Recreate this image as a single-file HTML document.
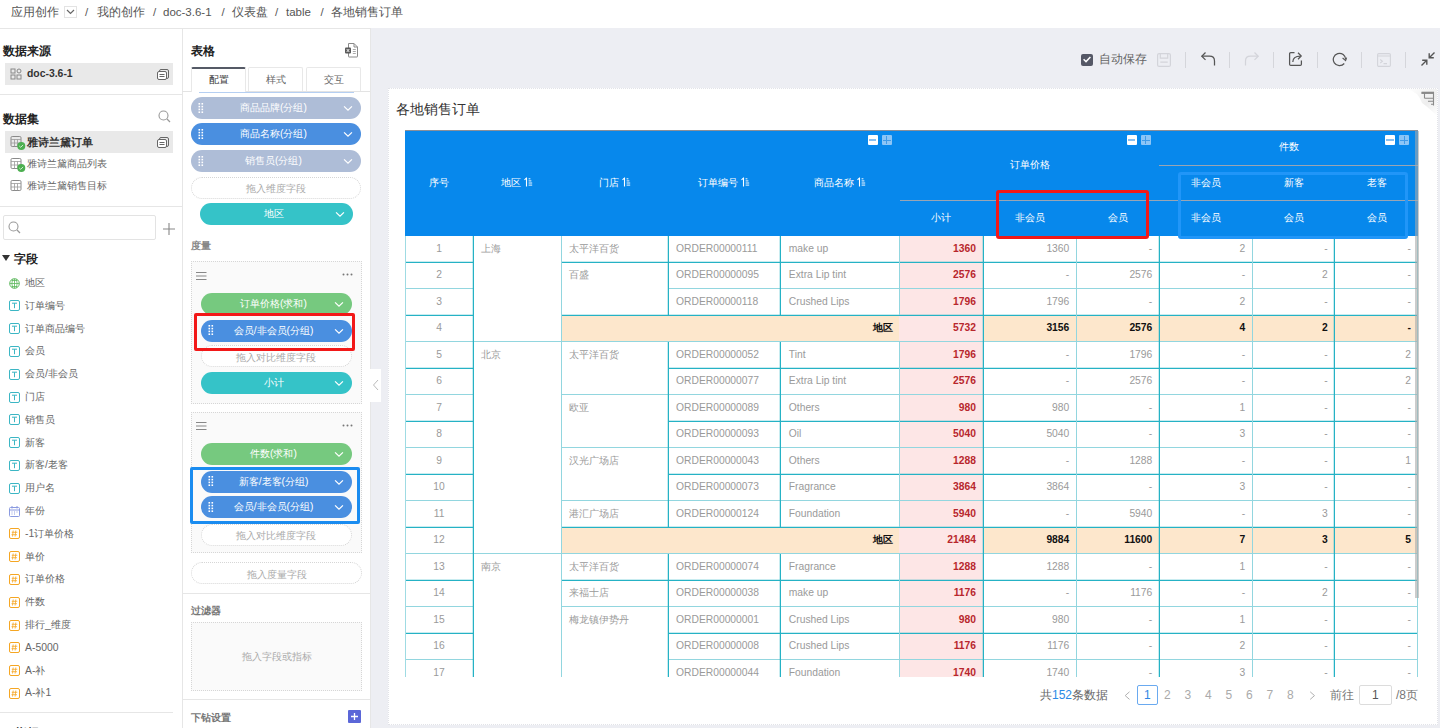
<!DOCTYPE html><html><head><meta charset="utf-8"><style>
*{box-sizing:border-box;margin:0;padding:0}
html,body{width:1440px;height:728px;overflow:hidden;background:#fff;font-family:"Liberation Sans",sans-serif;color:#333}
.a{position:absolute;white-space:nowrap}
.bc{font-size:11.5px;color:#555;top:4px;line-height:16px}
.pt{font-size:11.7px;font-weight:bold;color:#222}
.li{font-size:10.4px;color:#666;line-height:14px}
.pill{position:absolute;height:22px;border-radius:11px;color:#fff;font-size:10.2px;line-height:22px;text-align:center;padding-right:5px}
.dash{position:absolute;height:22px;border-radius:11px;border:1px dotted #d6d6d6;color:#aaa;font-size:10.2px;line-height:20px;text-align:center;padding-top:1.5px}
.chev{position:absolute;right:8px;top:8px;width:10px;height:7px}
.grip{position:absolute;left:7px;top:5.8px;width:6px;height:10px}
.ht{position:absolute;color:#fff;font-size:10.3px;line-height:14px;white-space:nowrap;transform:translate(-50%,-50%)}
.td{position:absolute;font-size:10.3px;line-height:14px;color:#9a9a9a;white-space:nowrap}
</style></head><body>
<div class="a" style="left:0;top:0;width:1440px;height:29px;background:#fff;border-bottom:1px solid #e6e6e6"></div>
<div class="a bc" style="left:11px">应用创作</div>
<div class="a bc" style="left:97px">我的创作</div>
<div class="a bc" style="left:163px">doc-3.6-1</div>
<div class="a bc" style="left:232px">仪表盘</div>
<div class="a bc" style="left:286px">table</div>
<div class="a bc" style="left:331px">各地销售订单</div>
<div class="a bc" style="left:85px">/</div>
<div class="a bc" style="left:153px">/</div>
<div class="a bc" style="left:221.5px">/</div>
<div class="a bc" style="left:275px">/</div>
<div class="a bc" style="left:320.5px">/</div>
<div class="a" style="left:64px;top:5.5px;width:12.5px;height:12.5px;border:1px solid #e3e3e3;background:#fff"></div>
<svg class="a" style="left:66px;top:8.5px" width="9" height="6"><path d="M1 1 L4.5 4.5 L8 1" stroke="#666" stroke-width="1.2" fill="none"/></svg>
<div class="a" style="left:182px;top:28px;width:1px;height:700px;background:#e6e6e6"></div>
<div class="a pt" style="left:3px;top:43px;line-height:16px">数据来源</div>
<div class="a" style="left:5px;top:63px;width:168px;height:22px;background:#e9e9e9"></div>
<svg class="a" style="left:10px;top:68px" width="12" height="12"><rect x="1" y="1" width="4" height="4" fill="none" stroke="#888" stroke-width="1"/><rect x="7" y="1" width="4" height="4" rx="2" fill="none" stroke="#888"/><rect x="1" y="7" width="4" height="4" fill="none" stroke="#888"/><rect x="7" y="7" width="4" height="4" fill="none" stroke="#888"/></svg>
<div class="a" style="left:27px;top:67px;font-size:10.4px;font-weight:bold;color:#333;line-height:14px">doc-3.6-1</div>
<svg class="a" style="left:157px;top:68px" width="12" height="12"><rect x="2.5" y="1.5" width="9" height="9" rx="1.5" fill="none" stroke="#666"/><rect x="0.5" y="3.5" width="9" height="8" rx="1.5" fill="#fff" stroke="#666"/><path d="M2.5 6.5h5M2.5 8.5h5" stroke="#666"/></svg>
<div class="a" style="left:0;top:94px;width:182px;height:1px;background:#e6e6e6"></div>
<div class="a pt" style="left:3px;top:111px;line-height:16px">数据集</div>
<svg class="a" style="left:158px;top:110px" width="13" height="13"><circle cx="5.5" cy="5.5" r="4.5" fill="none" stroke="#999" stroke-width="1.1"/><path d="M9 9 L12 12" stroke="#999" stroke-width="1.2"/></svg>
<div class="a" style="left:5px;top:131px;width:168px;height:22px;background:#e9e9e9"></div>
<svg class="a" style="left:10px;top:136px" width="17" height="15"><rect x="1" y="0.5" width="10" height="10" rx="1.2" fill="none" stroke="#8a8a8a"/><path d="M1 3.5h10M1 7h10M4.5 3.5v7M7.5 3.5v7" stroke="#9a9a9a" stroke-width="0.8"/><circle cx="11.3" cy="10" r="4" fill="#4caf50"/><path d="M9.3 10l1.4 1.3 2.4-2.4" stroke="#dff3df" stroke-width="0.9" fill="none"/></svg>
<div class="a" style="left:27px;top:135px;font-size:11px;font-weight:bold;color:#333;line-height:14px">雅诗兰黛订单</div>
<svg class="a" style="left:157px;top:136px" width="12" height="12"><rect x="2.5" y="1.5" width="9" height="9" rx="1.5" fill="none" stroke="#666"/><rect x="0.5" y="3.5" width="9" height="8" rx="1.5" fill="#fff" stroke="#666"/><path d="M2.5 6.5h5M2.5 8.5h5" stroke="#666"/></svg>
<svg class="a" style="left:10px;top:158px" width="17" height="15"><rect x="1" y="0.5" width="10" height="10" rx="1.2" fill="none" stroke="#8a8a8a"/><path d="M1 3.5h10M1 7h10M4.5 3.5v7M7.5 3.5v7" stroke="#9a9a9a" stroke-width="0.8"/><circle cx="11.3" cy="10" r="4" fill="#4caf50"/><path d="M9.3 10l1.4 1.3 2.4-2.4" stroke="#dff3df" stroke-width="0.9" fill="none"/></svg>
<div class="a li" style="left:27px;top:157px">雅诗兰黛商品列表</div>
<svg class="a" style="left:10px;top:180px" width="17" height="15"><rect x="1" y="0.5" width="10" height="10" rx="1.2" fill="none" stroke="#8a8a8a"/><path d="M1 3.5h10M1 7h10M4.5 3.5v7M7.5 3.5v7" stroke="#9a9a9a" stroke-width="0.8"/></svg>
<div class="a li" style="left:27px;top:179px">雅诗兰黛销售目标</div>
<div class="a" style="left:0;top:206px;width:182px;height:1px;background:#e6e6e6"></div>
<div class="a" style="left:3px;top:215px;width:153px;height:25px;border:1px solid #e3e3e3;border-radius:2px"></div>
<svg class="a" style="left:8px;top:221px" width="13" height="13"><circle cx="5.5" cy="5.5" r="4.5" fill="none" stroke="#999" stroke-width="1.1"/><path d="M9 9 L12 12" stroke="#999" stroke-width="1.2"/></svg>
<svg class="a" style="left:163px;top:223px" width="12" height="12"><path d="M6 0v12M0 6h12" stroke="#888" stroke-width="1.1"/></svg>
<svg class="a" style="left:2px;top:255px" width="8" height="6"><path d="M0 0h8L4 6z" fill="#333"/></svg>
<div class="a pt" style="left:14px;top:251px;line-height:16px">字段</div>
<svg class="a" style="left:9px;top:278px" width="11" height="11"><circle cx="5.5" cy="5.5" r="4.8" fill="none" stroke="#5cb85c"/><path d="M0.7 5.5h9.6M5.5 0.7v9.6M2.8 2.5h5.4M2.8 8.5h5.4M3.6 1.2q-1.4 4.3 0 8.6M7.4 1.2q1.4 4.3 0 8.6" stroke="#5cb85c" stroke-width="0.8" fill="none"/></svg>
<div class="a li" style="left:25px;top:276.0px">地区</div>
<svg class="a" style="left:9px;top:300px" width="11" height="11"><rect x="0.5" y="0.5" width="10" height="10" rx="1.5" fill="none" stroke="#3cb6c4"/><path d="M3 3.2h5M5.5 3.2v5" stroke="#3cb6c4" stroke-width="1"/></svg>
<div class="a li" style="left:25px;top:298.8px">订单编号</div>
<svg class="a" style="left:9px;top:323px" width="11" height="11"><rect x="0.5" y="0.5" width="10" height="10" rx="1.5" fill="none" stroke="#3cb6c4"/><path d="M3 3.2h5M5.5 3.2v5" stroke="#3cb6c4" stroke-width="1"/></svg>
<div class="a li" style="left:25px;top:321.6px">订单商品编号</div>
<svg class="a" style="left:9px;top:346px" width="11" height="11"><rect x="0.5" y="0.5" width="10" height="10" rx="1.5" fill="none" stroke="#3cb6c4"/><path d="M3 3.2h5M5.5 3.2v5" stroke="#3cb6c4" stroke-width="1"/></svg>
<div class="a li" style="left:25px;top:344.4px">会员</div>
<svg class="a" style="left:9px;top:369px" width="11" height="11"><rect x="0.5" y="0.5" width="10" height="10" rx="1.5" fill="none" stroke="#3cb6c4"/><path d="M3 3.2h5M5.5 3.2v5" stroke="#3cb6c4" stroke-width="1"/></svg>
<div class="a li" style="left:25px;top:367.2px">会员/非会员</div>
<svg class="a" style="left:9px;top:392px" width="11" height="11"><rect x="0.5" y="0.5" width="10" height="10" rx="1.5" fill="none" stroke="#3cb6c4"/><path d="M3 3.2h5M5.5 3.2v5" stroke="#3cb6c4" stroke-width="1"/></svg>
<div class="a li" style="left:25px;top:390.0px">门店</div>
<svg class="a" style="left:9px;top:414px" width="11" height="11"><rect x="0.5" y="0.5" width="10" height="10" rx="1.5" fill="none" stroke="#3cb6c4"/><path d="M3 3.2h5M5.5 3.2v5" stroke="#3cb6c4" stroke-width="1"/></svg>
<div class="a li" style="left:25px;top:412.8px">销售员</div>
<svg class="a" style="left:9px;top:437px" width="11" height="11"><rect x="0.5" y="0.5" width="10" height="10" rx="1.5" fill="none" stroke="#3cb6c4"/><path d="M3 3.2h5M5.5 3.2v5" stroke="#3cb6c4" stroke-width="1"/></svg>
<div class="a li" style="left:25px;top:435.6px">新客</div>
<svg class="a" style="left:9px;top:460px" width="11" height="11"><rect x="0.5" y="0.5" width="10" height="10" rx="1.5" fill="none" stroke="#3cb6c4"/><path d="M3 3.2h5M5.5 3.2v5" stroke="#3cb6c4" stroke-width="1"/></svg>
<div class="a li" style="left:25px;top:458.4px">新客/老客</div>
<svg class="a" style="left:9px;top:483px" width="11" height="11"><rect x="0.5" y="0.5" width="10" height="10" rx="1.5" fill="none" stroke="#3cb6c4"/><path d="M3 3.2h5M5.5 3.2v5" stroke="#3cb6c4" stroke-width="1"/></svg>
<div class="a li" style="left:25px;top:481.2px">用户名</div>
<svg class="a" style="left:9px;top:506px" width="11" height="11"><rect x="0.5" y="1.5" width="10" height="9" rx="1" fill="none" stroke="#8a9ae0"/><path d="M0.5 4h10M3 0v2.5M8 0v2.5" stroke="#8a9ae0"/><path d="M2.5 6h1M5 6h1M7.5 6h1M2.5 8h1M5 8h1" stroke="#8a9ae0"/></svg>
<div class="a li" style="left:25px;top:504.0px">年份</div>
<svg class="a" style="left:9px;top:528px" width="11" height="11"><rect x="0.5" y="0.5" width="10" height="10" rx="1.5" fill="none" stroke="#f5a623"/><path d="M4.2 2.5l-0.7 6M6.8 2.5l-0.7 6M2.8 4.3h5.5M2.5 6.7h5.5" stroke="#f5a623" stroke-width="0.8"/></svg>
<div class="a li" style="left:25px;top:526.8px">-1订单价格</div>
<svg class="a" style="left:9px;top:551px" width="11" height="11"><rect x="0.5" y="0.5" width="10" height="10" rx="1.5" fill="none" stroke="#f5a623"/><path d="M4.2 2.5l-0.7 6M6.8 2.5l-0.7 6M2.8 4.3h5.5M2.5 6.7h5.5" stroke="#f5a623" stroke-width="0.8"/></svg>
<div class="a li" style="left:25px;top:549.6px">单价</div>
<svg class="a" style="left:9px;top:574px" width="11" height="11"><rect x="0.5" y="0.5" width="10" height="10" rx="1.5" fill="none" stroke="#f5a623"/><path d="M4.2 2.5l-0.7 6M6.8 2.5l-0.7 6M2.8 4.3h5.5M2.5 6.7h5.5" stroke="#f5a623" stroke-width="0.8"/></svg>
<div class="a li" style="left:25px;top:572.4px">订单价格</div>
<svg class="a" style="left:9px;top:597px" width="11" height="11"><rect x="0.5" y="0.5" width="10" height="10" rx="1.5" fill="none" stroke="#f5a623"/><path d="M4.2 2.5l-0.7 6M6.8 2.5l-0.7 6M2.8 4.3h5.5M2.5 6.7h5.5" stroke="#f5a623" stroke-width="0.8"/></svg>
<div class="a li" style="left:25px;top:595.2px">件数</div>
<svg class="a" style="left:9px;top:620px" width="11" height="11"><rect x="0.5" y="0.5" width="10" height="10" rx="1.5" fill="none" stroke="#f5a623"/><path d="M4.2 2.5l-0.7 6M6.8 2.5l-0.7 6M2.8 4.3h5.5M2.5 6.7h5.5" stroke="#f5a623" stroke-width="0.8"/></svg>
<div class="a li" style="left:25px;top:618.0px">排行_维度</div>
<svg class="a" style="left:9px;top:642px" width="11" height="11"><rect x="0.5" y="0.5" width="10" height="10" rx="1.5" fill="none" stroke="#f5a623"/><path d="M4.2 2.5l-0.7 6M6.8 2.5l-0.7 6M2.8 4.3h5.5M2.5 6.7h5.5" stroke="#f5a623" stroke-width="0.8"/></svg>
<div class="a li" style="left:25px;top:640.8px">A-5000</div>
<svg class="a" style="left:9px;top:665px" width="11" height="11"><rect x="0.5" y="0.5" width="10" height="10" rx="1.5" fill="none" stroke="#f5a623"/><path d="M4.2 2.5l-0.7 6M6.8 2.5l-0.7 6M2.8 4.3h5.5M2.5 6.7h5.5" stroke="#f5a623" stroke-width="0.8"/></svg>
<div class="a li" style="left:25px;top:663.6px">A-补</div>
<svg class="a" style="left:9px;top:688px" width="11" height="11"><rect x="0.5" y="0.5" width="10" height="10" rx="1.5" fill="none" stroke="#f5a623"/><path d="M4.2 2.5l-0.7 6M6.8 2.5l-0.7 6M2.8 4.3h5.5M2.5 6.7h5.5" stroke="#f5a623" stroke-width="0.8"/></svg>
<div class="a li" style="left:25px;top:686.4px">A-补1</div>
<div class="a" style="left:0;top:712px;width:173px;height:1px;background:#e6e6e6"></div>
<div class="a pt" style="left:15px;top:725px;line-height:16px;color:#444">指标</div>
<div class="a" style="left:370px;top:28px;width:1px;height:700px;background:#e6e6e6"></div>
<div class="a pt" style="left:191px;top:43px;line-height:16px">表格</div>
<svg class="a" style="left:345px;top:42.5px" width="14" height="15"><path d="M3.5 0.5h5.5l3.5 3.5v9.5q0 0.5-0.5 0.5h-8q-0.5 0-0.5-0.5z" fill="#fff" stroke="#8a8a8a"/><path d="M9 0.5v3.5h3.5" fill="none" stroke="#8a8a8a"/><rect x="0" y="4.5" width="6" height="6" rx="1" fill="#5a5a5a"/><path d="M1.7 6 L4.3 9 M4.3 6 L1.7 9" stroke="#fff" stroke-width="0.9"/><path d="M7.8 6.5h3M7.8 8.5h3M7.8 10.5h3" stroke="#aaa" stroke-width="1"/></svg>
<div class="a" style="left:182px;top:91px;width:188px;height:1px;background:#e3e3e3"></div>
<div class="a" style="left:191px;top:67px;width:54.5px;height:25px;background:#fff;border:1px solid #e8e8e8;border-top:2px solid #555a66;border-bottom:none;border-radius:2px 2px 0 0"></div>
<div class="a" style="left:248px;top:67px;width:55px;height:24px;background:#fff;border:1px solid #e8e8e8;border-bottom:none;border-radius:2px 2px 0 0"></div>
<div class="a" style="left:306px;top:67px;width:55px;height:24px;background:#fff;border:1px solid #e8e8e8;border-bottom:none;border-radius:2px 2px 0 0"></div>
<div class="a" style="left:192px;top:73px;width:54px;text-align:center;font-size:10.3px;color:#333;line-height:14px">配置</div>
<div class="a" style="left:249px;top:73px;width:54px;text-align:center;font-size:10.3px;color:#666;line-height:14px">样式</div>
<div class="a" style="left:307px;top:73px;width:54px;text-align:center;font-size:10.3px;color:#666;line-height:14px">交互</div>
<div class="a" style="left:199px;top:91.5px;width:155px;height:1.5px;background:#b5cff2"></div>
<div class="pill" style="left:191px;top:97px;width:170px;background:#aebdd7"><svg class="grip" viewBox="0 0 5 10"><g fill="#fff"><rect x="0" y="0" width="1.6" height="1.6"/><rect x="3" y="0" width="1.6" height="1.6"/><rect x="0" y="2.8" width="1.6" height="1.6"/><rect x="3" y="2.8" width="1.6" height="1.6"/><rect x="0" y="5.6" width="1.6" height="1.6"/><rect x="3" y="5.6" width="1.6" height="1.6"/><rect x="0" y="8.4" width="1.6" height="1.6"/><rect x="3" y="8.4" width="1.6" height="1.6"/></g></svg>商品品牌(分组)<svg class="chev" viewBox="0 0 11 8"><path d="M1 1.5 L5.5 6 L10 1.5" stroke="#fff" stroke-width="1.4" fill="none"/></svg></div>
<div class="pill" style="left:191px;top:123px;width:170px;background:#4a8fe0"><svg class="grip" viewBox="0 0 5 10"><g fill="#fff"><rect x="0" y="0" width="1.6" height="1.6"/><rect x="3" y="0" width="1.6" height="1.6"/><rect x="0" y="2.8" width="1.6" height="1.6"/><rect x="3" y="2.8" width="1.6" height="1.6"/><rect x="0" y="5.6" width="1.6" height="1.6"/><rect x="3" y="5.6" width="1.6" height="1.6"/><rect x="0" y="8.4" width="1.6" height="1.6"/><rect x="3" y="8.4" width="1.6" height="1.6"/></g></svg>商品名称(分组)<svg class="chev" viewBox="0 0 11 8"><path d="M1 1.5 L5.5 6 L10 1.5" stroke="#fff" stroke-width="1.4" fill="none"/></svg></div>
<div class="pill" style="left:191px;top:150px;width:170px;background:#aebdd7"><svg class="grip" viewBox="0 0 5 10"><g fill="#fff"><rect x="0" y="0" width="1.6" height="1.6"/><rect x="3" y="0" width="1.6" height="1.6"/><rect x="0" y="2.8" width="1.6" height="1.6"/><rect x="3" y="2.8" width="1.6" height="1.6"/><rect x="0" y="5.6" width="1.6" height="1.6"/><rect x="3" y="5.6" width="1.6" height="1.6"/><rect x="0" y="8.4" width="1.6" height="1.6"/><rect x="3" y="8.4" width="1.6" height="1.6"/></g></svg>销售员(分组)<svg class="chev" viewBox="0 0 11 8"><path d="M1 1.5 L5.5 6 L10 1.5" stroke="#fff" stroke-width="1.4" fill="none"/></svg></div>
<div class="dash" style="left:191px;top:176.5px;width:170px">拖入维度字段</div>
<div class="pill" style="left:199.5px;top:203.3px;width:153px;background:#35c3c8">地区<svg class="chev" viewBox="0 0 11 8"><path d="M1 1.5 L5.5 6 L10 1.5" stroke="#fff" stroke-width="1.4" fill="none"/></svg></div>
<div class="a" style="left:191px;top:238.5px;font-size:10.3px;color:#888;font-weight:bold;line-height:14px">度量</div>
<div class="a" style="left:191px;top:261px;width:171px;height:143px;background:#fafafa;border:1px dotted #d6d6d6"></div>
<svg class="a" style="left:196px;top:272px" width="11" height="9"><path d="M0 0.5h10.5M0 4h10.5M0 7.5h10.5" stroke="#888" stroke-width="1"/></svg>
<svg class="a" style="left:342px;top:273px" width="11" height="3"><circle cx="1.5" cy="1.5" r="1" fill="#777"/><circle cx="5.5" cy="1.5" r="1" fill="#777"/><circle cx="9.5" cy="1.5" r="1" fill="#777"/></svg>
<div class="pill" style="left:200.5px;top:292.5px;width:151px;background:#76c97f">订单价格(求和)<svg class="chev" viewBox="0 0 11 8"><path d="M1 1.5 L5.5 6 L10 1.5" stroke="#fff" stroke-width="1.4" fill="none"/></svg></div>
<div class="pill" style="left:200.5px;top:319.5px;width:151px;background:#4a8fe0"><svg class="grip" viewBox="0 0 5 10"><g fill="#fff"><rect x="0" y="0" width="1.6" height="1.6"/><rect x="3" y="0" width="1.6" height="1.6"/><rect x="0" y="2.8" width="1.6" height="1.6"/><rect x="3" y="2.8" width="1.6" height="1.6"/><rect x="0" y="5.6" width="1.6" height="1.6"/><rect x="3" y="5.6" width="1.6" height="1.6"/><rect x="0" y="8.4" width="1.6" height="1.6"/><rect x="3" y="8.4" width="1.6" height="1.6"/></g></svg>会员/非会员(分组)<svg class="chev" viewBox="0 0 11 8"><path d="M1 1.5 L5.5 6 L10 1.5" stroke="#fff" stroke-width="1.4" fill="none"/></svg></div>
<div class="dash" style="left:200.5px;top:345px;width:151px;background:#fff">拖入对比维度字段</div>
<div class="pill" style="left:200.5px;top:372.2px;width:151px;background:#35c3c8">小计<svg class="chev" viewBox="0 0 11 8"><path d="M1 1.5 L5.5 6 L10 1.5" stroke="#fff" stroke-width="1.4" fill="none"/></svg></div>
<div class="a" style="left:194px;top:312.5px;width:161px;height:38.5px;border:3px solid #f21818;border-radius:2px"></div>
<div class="a" style="left:191px;top:412px;width:171px;height:141px;background:#fafafa;border:1px dotted #d6d6d6"></div>
<svg class="a" style="left:196px;top:422px" width="11" height="9"><path d="M0 0.5h10.5M0 4h10.5M0 7.5h10.5" stroke="#888" stroke-width="1"/></svg>
<svg class="a" style="left:342px;top:424px" width="11" height="3"><circle cx="1.5" cy="1.5" r="1" fill="#777"/><circle cx="5.5" cy="1.5" r="1" fill="#777"/><circle cx="9.5" cy="1.5" r="1" fill="#777"/></svg>
<div class="pill" style="left:200.5px;top:443.3px;width:151px;background:#76c97f">件数(求和)<svg class="chev" viewBox="0 0 11 8"><path d="M1 1.5 L5.5 6 L10 1.5" stroke="#fff" stroke-width="1.4" fill="none"/></svg></div>
<div class="pill" style="left:200.5px;top:470.5px;width:151px;background:#4a8fe0"><svg class="grip" viewBox="0 0 5 10"><g fill="#fff"><rect x="0" y="0" width="1.6" height="1.6"/><rect x="3" y="0" width="1.6" height="1.6"/><rect x="0" y="2.8" width="1.6" height="1.6"/><rect x="3" y="2.8" width="1.6" height="1.6"/><rect x="0" y="5.6" width="1.6" height="1.6"/><rect x="3" y="5.6" width="1.6" height="1.6"/><rect x="0" y="8.4" width="1.6" height="1.6"/><rect x="3" y="8.4" width="1.6" height="1.6"/></g></svg>新客/老客(分组)<svg class="chev" viewBox="0 0 11 8"><path d="M1 1.5 L5.5 6 L10 1.5" stroke="#fff" stroke-width="1.4" fill="none"/></svg></div>
<div class="pill" style="left:200.5px;top:496.4px;width:151px;background:#4a8fe0"><svg class="grip" viewBox="0 0 5 10"><g fill="#fff"><rect x="0" y="0" width="1.6" height="1.6"/><rect x="3" y="0" width="1.6" height="1.6"/><rect x="0" y="2.8" width="1.6" height="1.6"/><rect x="3" y="2.8" width="1.6" height="1.6"/><rect x="0" y="5.6" width="1.6" height="1.6"/><rect x="3" y="5.6" width="1.6" height="1.6"/><rect x="0" y="8.4" width="1.6" height="1.6"/><rect x="3" y="8.4" width="1.6" height="1.6"/></g></svg>会员/非会员(分组)<svg class="chev" viewBox="0 0 11 8"><path d="M1 1.5 L5.5 6 L10 1.5" stroke="#fff" stroke-width="1.4" fill="none"/></svg></div>
<div class="dash" style="left:200.5px;top:523.5px;width:151px;background:#fff">拖入对比维度字段</div>
<div class="a" style="left:190px;top:466.5px;width:170px;height:57px;border:3px solid #1a8cf0;border-radius:2px"></div>
<div class="dash" style="left:191px;top:562px;width:171px">拖入度量字段</div>
<div class="a" style="left:182px;top:593px;width:188px;height:1px;background:#e6e6e6"></div>
<div class="a" style="left:191px;top:604px;font-size:10.3px;color:#777;font-weight:bold;line-height:14px">过滤器</div>
<div class="a" style="left:191px;top:622px;width:171px;height:69px;background:#fafafa;border:1px dotted #d6d6d6"></div>
<div class="a" style="left:191px;top:650px;width:171px;text-align:center;font-size:10.3px;color:#aaa;line-height:14px">拖入字段或指标</div>
<div class="a" style="left:182px;top:699px;width:188px;height:1px;background:#e6e6e6"></div>
<div class="a" style="left:191px;top:710.5px;font-size:10.3px;color:#777;font-weight:bold;line-height:14px">下钻设置</div>
<div class="a" style="left:348px;top:710px;width:13px;height:12.5px;background:#5b67d8;border-radius:1px"></div>
<svg class="a" style="left:350px;top:712px" width="9" height="9"><path d="M4.5 1v7M1 4.5h7" stroke="#fff" stroke-width="1.3"/></svg>
<div class="a" style="left:371px;top:28px;width:1069px;height:700px;background:#edeef3"></div>
<div class="a" style="left:370px;top:369px;width:11px;height:33px;background:#fff"></div>
<svg class="a" style="left:372px;top:379px" width="7" height="12"><path d="M6 1 L1.5 6 L6 11" stroke="#bbb" stroke-width="1" fill="none"/></svg>
<div class="a" style="left:1081px;top:53.5px;width:12px;height:12px;background:#555866;border-radius:2px"></div>
<svg class="a" style="left:1082px;top:55px" width="10" height="9"><path d="M1.6 4.3 L4 6.6 L8.4 2.0" stroke="#fff" stroke-width="1.5" fill="none"/></svg>
<div class="a" style="left:1099px;top:52.3px;font-size:12px;color:#666;line-height:15px">自动保存</div>
<div class="a" style="left:1185px;top:52px;width:1px;height:16px;background:#d5d6db"></div>
<div class="a" style="left:1229px;top:52px;width:1px;height:16px;background:#d5d6db"></div>
<div class="a" style="left:1273px;top:52px;width:1px;height:16px;background:#d5d6db"></div>
<div class="a" style="left:1317px;top:52px;width:1px;height:16px;background:#d5d6db"></div>
<div class="a" style="left:1361px;top:52px;width:1px;height:16px;background:#d5d6db"></div>
<div class="a" style="left:1405px;top:52px;width:1px;height:16px;background:#d5d6db"></div>
<svg class="a" style="left:1157px;top:52.5px" width="14" height="14"><rect x="0.6" y="0.6" width="12.8" height="12.8" rx="1.5" fill="none" stroke="#d3d4da" stroke-width="1.2"/><path d="M3.3 0.6v4.6h7.4v-4.6M3.3 9.2h7.4" fill="none" stroke="#d3d4da" stroke-width="1.2"/></svg>
<svg class="a" style="left:1200px;top:51px" width="17" height="16"><path d="M5.5 1.5 L1.8 5.2 L5.5 8.9" stroke="#555" stroke-width="1.25" fill="none"/><path d="M1.8 5.2 H9.5 Q14.5 5.2 14.5 10 V14.5" stroke="#555" stroke-width="1.25" fill="none"/></svg>
<svg class="a" style="left:1243px;top:51px" width="17" height="16"><path d="M11.5 1.5 L15.2 5.2 L11.5 8.9" stroke="#d3d4da" stroke-width="1.25" fill="none"/><path d="M15.2 5.2 H7.5 Q2.5 5.2 2.5 10 V14.5" stroke="#d3d4da" stroke-width="1.25" fill="none"/></svg>
<svg class="a" style="left:1288px;top:51px" width="16" height="16"><path d="M6.5 1.6 H2.8 Q1.6 1.6 1.6 2.8 V13.2 Q1.6 14.4 2.8 14.4 H12.2 Q13.4 14.4 13.4 13.2 V9.5" stroke="#555" stroke-width="1.25" fill="none"/><path d="M4.8 11 Q4.8 5 12.5 5" stroke="#555" stroke-width="1.25" fill="none"/><path d="M10 1.8 L13.2 5 L10 8.2" stroke="#555" stroke-width="1.25" fill="none"/></svg>
<svg class="a" style="left:1332px;top:51.5px" width="16" height="16"><path d="M12.25 11.49 A6.2 6.2 0 1 1 13.7 7.5" stroke="#555" stroke-width="1.25" fill="none"/><path d="M10.6 6.0 L13.6 8.6 L14.6 5.6" stroke="#555" stroke-width="1.1" fill="none"/></svg>
<svg class="a" style="left:1377px;top:52.5px" width="14" height="14"><rect x="0.6" y="0.6" width="12.8" height="12.8" rx="1.2" fill="none" stroke="#d3d4da" stroke-width="1.1"/><path d="M0.6 3h12.8M3.2 6.5l2.2 1.8-2.2 1.8M6.5 10.6h3.5" stroke="#d3d4da" fill="none" stroke-width="1.1"/></svg>
<svg class="a" style="left:1420px;top:51px" width="16" height="16"><path d="M1.5 14.5 L6.5 9.5 M2.2 9.2 H6.8 V13.8" stroke="#555" stroke-width="1.4" fill="none"/><path d="M14.5 1.5 L9.5 6.5 M13.8 6.8 H9.2 V2.2" stroke="#555" stroke-width="1.4" fill="none"/></svg>
<div class="a" style="left:387.5px;top:88px;width:1050px;height:636.5px;background:#fff;border:1px dotted #e2e3e8"></div>
<div class="a" style="left:396px;top:101px;font-size:13.7px;color:#333;line-height:17px">各地销售订单</div>
<svg class="a" style="left:1400px;top:89px" width="37" height="32"><defs><linearGradient id="cf" x1="0" y1="0" x2="1" y2="1"><stop offset="0" stop-color="#fff"/><stop offset="0.6" stop-color="#ececec"/><stop offset="1" stop-color="#fff"/></linearGradient></defs><path d="M6 0 Q18 2 22 14 Q28 18 37 27 L37 0z" fill="url(#cf)" opacity="0.9"/><path d="M21.5 4 H34 M33.5 3 V16.5 M24.5 4 V9.5 M25 9.2 H34 M28 12.2 H34 M31 15.2 H34" stroke="#8a8a8a" stroke-width="1.1" fill="none"/><path d="M21.5 3.8 H34" stroke="#8a8a8a" stroke-width="2.2"/></svg>
<div class="a" style="left:405px;top:129.5px;width:1013px;height:106.0px;background:#0788ec;border-top:1px solid #8a8f99"></div>
<div class="ht" style="left:439.05px;top:183px">序号</div>
<div class="ht" style="left:517.2px;top:183px">地区<svg width="9" height="10" style="margin-left:3px;vertical-align:-1px"><path d="M2.5 0.6V9.6M2.6 0.8L0.5 2.8" stroke="#fff" stroke-width="1.1" fill="none"/><path d="M4.6 1.8h1.8M4.6 3.9h2.8M4.6 6h3.6M4.6 8.1h3.6" stroke="#fff" stroke-width="0.95"/></svg></div>
<div class="ht" style="left:614.65px;top:183px">门店<svg width="9" height="10" style="margin-left:3px;vertical-align:-1px"><path d="M2.5 0.6V9.6M2.6 0.8L0.5 2.8" stroke="#fff" stroke-width="1.1" fill="none"/><path d="M4.6 1.8h1.8M4.6 3.9h2.8M4.6 6h3.6M4.6 8.1h3.6" stroke="#fff" stroke-width="0.95"/></svg></div>
<div class="ht" style="left:724.4px;top:183px">订单编号<svg width="9" height="10" style="margin-left:3px;vertical-align:-1px"><path d="M2.5 0.6V9.6M2.6 0.8L0.5 2.8" stroke="#fff" stroke-width="1.1" fill="none"/><path d="M4.6 1.8h1.8M4.6 3.9h2.8M4.6 6h3.6M4.6 8.1h3.6" stroke="#fff" stroke-width="0.95"/></svg></div>
<div class="ht" style="left:840.0999999999999px;top:183px">商品名称<svg width="9" height="10" style="margin-left:3px;vertical-align:-1px"><path d="M2.5 0.6V9.6M2.6 0.8L0.5 2.8" stroke="#fff" stroke-width="1.1" fill="none"/><path d="M4.6 1.8h1.8M4.6 3.9h2.8M4.6 6h3.6M4.6 8.1h3.6" stroke="#fff" stroke-width="0.95"/></svg></div>
<div class="ht" style="left:1029.5px;top:165px">订单价格</div>
<div class="ht" style="left:941px;top:217.5px">小计</div>
<div class="ht" style="left:1029.5px;top:217.5px">非会员</div>
<div class="ht" style="left:1117.5px;top:217.5px">会员</div>
<div class="ht" style="left:1205.5px;top:217.5px">非会员</div>
<div class="ht" style="left:1293.5px;top:217.5px">会员</div>
<div class="ht" style="left:1376.5px;top:217.5px">会员</div>
<div class="ht" style="left:1289px;top:147px">件数</div>
<div class="ht" style="left:1205.5px;top:183px">非会员</div>
<div class="ht" style="left:1293.5px;top:183px">新客</div>
<div class="ht" style="left:1376.5px;top:183px">老客</div>
<div class="a" style="left:900px;top:200px;width:518px;height:1px;background:#9aa5b3"></div>
<div class="a" style="left:1159px;top:165px;width:259px;height:1px;background:#9aa5b3"></div>
<div class="a" style="left:867.5px;top:135px;width:10px;height:10px;background:#fff;border-radius:1px"></div><div class="a" style="left:868.7px;top:139px;width:7.6px;height:2px;background:#86c0f3"></div><div class="a" style="left:881.5px;top:135px;width:10px;height:10px;background:#8cc5f6;border-radius:1px"></div><div class="a" style="left:882.5px;top:139.5px;width:8px;height:1px;background:#3f9be9"></div><div class="a" style="left:886.0px;top:136px;width:1px;height:8px;background:#3f9be9"></div>
<div class="a" style="left:1126.5px;top:135px;width:10px;height:10px;background:#fff;border-radius:1px"></div><div class="a" style="left:1127.7px;top:139px;width:7.6px;height:2px;background:#86c0f3"></div><div class="a" style="left:1140.5px;top:135px;width:10px;height:10px;background:#8cc5f6;border-radius:1px"></div><div class="a" style="left:1141.5px;top:139.5px;width:8px;height:1px;background:#3f9be9"></div><div class="a" style="left:1145.0px;top:136px;width:1px;height:8px;background:#3f9be9"></div>
<div class="a" style="left:1385px;top:135px;width:10px;height:10px;background:#fff;border-radius:1px"></div><div class="a" style="left:1386.2px;top:139px;width:7.6px;height:2px;background:#86c0f3"></div><div class="a" style="left:1399px;top:135px;width:10px;height:10px;background:#8cc5f6;border-radius:1px"></div><div class="a" style="left:1400px;top:139.5px;width:8px;height:1px;background:#3f9be9"></div><div class="a" style="left:1403.5px;top:136px;width:1px;height:8px;background:#3f9be9"></div>
<div class="a" style="left:405px;top:235.5px;width:1013px;height:441.0px;overflow:hidden">
<div class="a" style="left:494.4px;top:0;width:83.60000000000002px;height:441.0px;background:#fde6e6"></div>
<div class="a" style="left:156.29999999999995px;top:79.5px;width:338.1px;height:26.5px;background:#fde7cc"></div>
<div class="a" style="left:578px;top:79.5px;width:435px;height:26.5px;background:#fde7cc"></div>
<div class="a" style="left:156.29999999999995px;top:291.5px;width:338.1px;height:26.5px;background:#fde7cc"></div>
<div class="a" style="left:578px;top:291.5px;width:435px;height:26.5px;background:#fde7cc"></div>
<div class="a" style="left:0px;top:26.5px;width:68px;height:1px;background:#25b2c5;box-shadow:0 -1px 0 rgba(37,178,197,0.25)"></div>
<div class="a" style="left:156px;top:26.5px;width:107px;height:1px;background:#25b2c5;box-shadow:0 -1px 0 rgba(37,178,197,0.25)"></div>
<div class="a" style="left:263px;top:26.5px;width:751px;height:1px;background:#25b2c5;box-shadow:0 -1px 0 rgba(37,178,197,0.25)"></div>
<div class="a" style="left:0px;top:52.5px;width:68px;height:1px;background:#92d6df"></div>
<div class="a" style="left:263px;top:52.5px;width:751px;height:1px;background:#92d6df"></div>
<div class="a" style="left:0px;top:79.5px;width:68px;height:1px;background:#25b2c5;box-shadow:0 -1px 0 rgba(37,178,197,0.25)"></div>
<div class="a" style="left:156px;top:79.5px;width:107px;height:1px;background:#25b2c5;box-shadow:0 -1px 0 rgba(37,178,197,0.25)"></div>
<div class="a" style="left:263px;top:79.5px;width:751px;height:1px;background:#25b2c5;box-shadow:0 -1px 0 rgba(37,178,197,0.25)"></div>
<div class="a" style="left:0px;top:105.5px;width:68px;height:1px;background:#92d6df"></div>
<div class="a" style="left:68px;top:105.5px;width:88px;height:1px;background:#92d6df"></div>
<div class="a" style="left:156px;top:105.5px;width:107px;height:1px;background:#92d6df"></div>
<div class="a" style="left:263px;top:105.5px;width:751px;height:1px;background:#92d6df"></div>
<div class="a" style="left:0px;top:132.5px;width:68px;height:1px;background:#25b2c5;box-shadow:0 -1px 0 rgba(37,178,197,0.25)"></div>
<div class="a" style="left:263px;top:132.5px;width:751px;height:1px;background:#25b2c5;box-shadow:0 -1px 0 rgba(37,178,197,0.25)"></div>
<div class="a" style="left:0px;top:158.5px;width:68px;height:1px;background:#92d6df"></div>
<div class="a" style="left:156px;top:158.5px;width:107px;height:1px;background:#92d6df"></div>
<div class="a" style="left:263px;top:158.5px;width:751px;height:1px;background:#92d6df"></div>
<div class="a" style="left:0px;top:185.5px;width:68px;height:1px;background:#25b2c5;box-shadow:0 -1px 0 rgba(37,178,197,0.25)"></div>
<div class="a" style="left:263px;top:185.5px;width:751px;height:1px;background:#25b2c5;box-shadow:0 -1px 0 rgba(37,178,197,0.25)"></div>
<div class="a" style="left:0px;top:211.5px;width:68px;height:1px;background:#92d6df"></div>
<div class="a" style="left:156px;top:211.5px;width:107px;height:1px;background:#92d6df"></div>
<div class="a" style="left:263px;top:211.5px;width:751px;height:1px;background:#92d6df"></div>
<div class="a" style="left:0px;top:238.5px;width:68px;height:1px;background:#25b2c5;box-shadow:0 -1px 0 rgba(37,178,197,0.25)"></div>
<div class="a" style="left:263px;top:238.5px;width:751px;height:1px;background:#25b2c5;box-shadow:0 -1px 0 rgba(37,178,197,0.25)"></div>
<div class="a" style="left:0px;top:264.5px;width:68px;height:1px;background:#92d6df"></div>
<div class="a" style="left:156px;top:264.5px;width:107px;height:1px;background:#92d6df"></div>
<div class="a" style="left:263px;top:264.5px;width:751px;height:1px;background:#92d6df"></div>
<div class="a" style="left:0px;top:291.5px;width:68px;height:1px;background:#25b2c5;box-shadow:0 -1px 0 rgba(37,178,197,0.25)"></div>
<div class="a" style="left:156px;top:291.5px;width:107px;height:1px;background:#25b2c5;box-shadow:0 -1px 0 rgba(37,178,197,0.25)"></div>
<div class="a" style="left:263px;top:291.5px;width:751px;height:1px;background:#25b2c5;box-shadow:0 -1px 0 rgba(37,178,197,0.25)"></div>
<div class="a" style="left:0px;top:317.5px;width:68px;height:1px;background:#92d6df"></div>
<div class="a" style="left:68px;top:317.5px;width:88px;height:1px;background:#92d6df"></div>
<div class="a" style="left:156px;top:317.5px;width:107px;height:1px;background:#92d6df"></div>
<div class="a" style="left:263px;top:317.5px;width:751px;height:1px;background:#92d6df"></div>
<div class="a" style="left:0px;top:344.5px;width:68px;height:1px;background:#25b2c5;box-shadow:0 -1px 0 rgba(37,178,197,0.25)"></div>
<div class="a" style="left:156px;top:344.5px;width:107px;height:1px;background:#25b2c5;box-shadow:0 -1px 0 rgba(37,178,197,0.25)"></div>
<div class="a" style="left:263px;top:344.5px;width:751px;height:1px;background:#25b2c5;box-shadow:0 -1px 0 rgba(37,178,197,0.25)"></div>
<div class="a" style="left:0px;top:370.5px;width:68px;height:1px;background:#92d6df"></div>
<div class="a" style="left:156px;top:370.5px;width:107px;height:1px;background:#92d6df"></div>
<div class="a" style="left:263px;top:370.5px;width:751px;height:1px;background:#92d6df"></div>
<div class="a" style="left:0px;top:397.5px;width:68px;height:1px;background:#25b2c5;box-shadow:0 -1px 0 rgba(37,178,197,0.25)"></div>
<div class="a" style="left:263px;top:397.5px;width:751px;height:1px;background:#25b2c5;box-shadow:0 -1px 0 rgba(37,178,197,0.25)"></div>
<div class="a" style="left:0px;top:423.5px;width:68px;height:1px;background:#92d6df"></div>
<div class="a" style="left:263px;top:423.5px;width:751px;height:1px;background:#92d6df"></div>
<div class="a" style="left:0px;top:450.5px;width:68px;height:1px;background:#25b2c5;box-shadow:0 -1px 0 rgba(37,178,197,0.25)"></div>
<div class="a" style="left:263px;top:450.5px;width:751px;height:1px;background:#25b2c5;box-shadow:0 -1px 0 rgba(37,178,197,0.25)"></div>
<div class="a" style="left:0px;top:0.0px;width:1px;height:441.0px;background:#9fdbe3"></div>
<div class="a" style="left:68px;top:0.0px;width:1px;height:441.0px;background:#25b2c5;box-shadow:-1px 0 0 rgba(37,178,197,0.25)"></div>
<div class="a" style="left:156px;top:0.0px;width:1px;height:441.0px;background:#92d6df"></div>
<div class="a" style="left:263px;top:0.0px;width:1px;height:79.5px;background:#25b2c5;box-shadow:-1px 0 0 rgba(37,178,197,0.25)"></div>
<div class="a" style="left:263px;top:106.0px;width:1px;height:185.5px;background:#25b2c5;box-shadow:-1px 0 0 rgba(37,178,197,0.25)"></div>
<div class="a" style="left:263px;top:318.0px;width:1px;height:123.0px;background:#25b2c5;box-shadow:-1px 0 0 rgba(37,178,197,0.25)"></div>
<div class="a" style="left:375px;top:0.0px;width:1px;height:79.5px;background:#25b2c5;box-shadow:-1px 0 0 rgba(37,178,197,0.25)"></div>
<div class="a" style="left:375px;top:106.0px;width:1px;height:185.5px;background:#25b2c5;box-shadow:-1px 0 0 rgba(37,178,197,0.25)"></div>
<div class="a" style="left:375px;top:318.0px;width:1px;height:123.0px;background:#25b2c5;box-shadow:-1px 0 0 rgba(37,178,197,0.25)"></div>
<div class="a" style="left:494px;top:0.0px;width:1px;height:79.5px;background:#92d6df"></div>
<div class="a" style="left:494px;top:106.0px;width:1px;height:185.5px;background:#92d6df"></div>
<div class="a" style="left:494px;top:318.0px;width:1px;height:123.0px;background:#92d6df"></div>
<div class="a" style="left:578px;top:0.0px;width:1px;height:441.0px;background:#25b2c5;box-shadow:-1px 0 0 rgba(37,178,197,0.25)"></div>
<div class="a" style="left:671px;top:0.0px;width:1px;height:441.0px;background:#92d6df"></div>
<div class="a" style="left:754px;top:0.0px;width:1px;height:441.0px;background:#25b2c5;box-shadow:-1px 0 0 rgba(37,178,197,0.25)"></div>
<div class="a" style="left:847px;top:0.0px;width:1px;height:441.0px;background:#92d6df"></div>
<div class="a" style="left:929px;top:0.0px;width:1px;height:441.0px;background:#25b2c5;box-shadow:-1px 0 0 rgba(37,178,197,0.25)"></div>
<div class="a" style="left:1012px;top:0.0px;width:1px;height:441.0px;background:#92d6df"></div>
<div class="td" style="left:0;top:6.400000000000006px;width:68.10000000000002px;text-align:center">1</div>
<div class="td" style="left:76.10000000000002px;top:6.400000000000006px;">上海</div>
<div class="td" style="left:164.29999999999995px;top:6.400000000000006px;">太平洋百货</div>
<div class="td" style="left:271px;top:6.400000000000006px;">ORDER00000111</div>
<div class="td" style="left:383.79999999999995px;top:6.400000000000006px;">make up</div>
<div class="td" style="left:494.4px;top:6.400000000000006px;width:76.60000000000002px;text-align:right;color:#b8262d;font-weight:bold">1360</div>
<div class="td" style="left:578px;top:6.400000000000006px;width:86.29999999999995px;text-align:right">1360</div>
<div class="td" style="left:671.3px;top:6.400000000000006px;width:76.0px;text-align:right">-</div>
<div class="td" style="left:754.3px;top:6.400000000000006px;width:85.90000000000009px;text-align:right">2</div>
<div class="td" style="left:847.2px;top:6.400000000000006px;width:75.5px;text-align:right">-</div>
<div class="td" style="left:929.7px;top:6.400000000000006px;width:76.29999999999995px;text-align:right">-</div>
<div class="td" style="left:0;top:32.89999999999998px;width:68.10000000000002px;text-align:center">2</div>
<div class="td" style="left:164.29999999999995px;top:32.89999999999998px;">百盛</div>
<div class="td" style="left:271px;top:32.89999999999998px;">ORDER00000095</div>
<div class="td" style="left:383.79999999999995px;top:32.89999999999998px;">Extra Lip tint</div>
<div class="td" style="left:494.4px;top:32.89999999999998px;width:76.60000000000002px;text-align:right;color:#b8262d;font-weight:bold">2576</div>
<div class="td" style="left:578px;top:32.89999999999998px;width:86.29999999999995px;text-align:right">-</div>
<div class="td" style="left:671.3px;top:32.89999999999998px;width:76.0px;text-align:right">2576</div>
<div class="td" style="left:754.3px;top:32.89999999999998px;width:85.90000000000009px;text-align:right">-</div>
<div class="td" style="left:847.2px;top:32.89999999999998px;width:75.5px;text-align:right">2</div>
<div class="td" style="left:929.7px;top:32.89999999999998px;width:76.29999999999995px;text-align:right">-</div>
<div class="td" style="left:0;top:59.39999999999998px;width:68.10000000000002px;text-align:center">3</div>
<div class="td" style="left:271px;top:59.39999999999998px;">ORDER00000118</div>
<div class="td" style="left:383.79999999999995px;top:59.39999999999998px;">Crushed Lips</div>
<div class="td" style="left:494.4px;top:59.39999999999998px;width:76.60000000000002px;text-align:right;color:#b8262d;font-weight:bold">1796</div>
<div class="td" style="left:578px;top:59.39999999999998px;width:86.29999999999995px;text-align:right">1796</div>
<div class="td" style="left:671.3px;top:59.39999999999998px;width:76.0px;text-align:right">-</div>
<div class="td" style="left:754.3px;top:59.39999999999998px;width:85.90000000000009px;text-align:right">2</div>
<div class="td" style="left:847.2px;top:59.39999999999998px;width:75.5px;text-align:right">-</div>
<div class="td" style="left:929.7px;top:59.39999999999998px;width:76.29999999999995px;text-align:right">-</div>
<div class="td" style="left:0;top:85.89999999999998px;width:68.10000000000002px;text-align:center">4</div>
<div class="td" style="left:156.29999999999995px;top:85.89999999999998px;width:332.1px;text-align:right;color:#111;font-weight:bold">地区</div>
<div class="td" style="left:494.4px;top:85.89999999999998px;width:76.60000000000002px;text-align:right;color:#b8262d;font-weight:bold">5732</div>
<div class="td" style="left:578px;top:85.89999999999998px;width:86.29999999999995px;text-align:right;color:#111;font-weight:bold">3156</div>
<div class="td" style="left:671.3px;top:85.89999999999998px;width:76.0px;text-align:right;color:#111;font-weight:bold">2576</div>
<div class="td" style="left:754.3px;top:85.89999999999998px;width:85.90000000000009px;text-align:right;color:#111;font-weight:bold">4</div>
<div class="td" style="left:847.2px;top:85.89999999999998px;width:75.5px;text-align:right;color:#111;font-weight:bold">2</div>
<div class="td" style="left:929.7px;top:85.89999999999998px;width:76.29999999999995px;text-align:right;color:#111;font-weight:bold">-</div>
<div class="td" style="left:0;top:112.39999999999998px;width:68.10000000000002px;text-align:center">5</div>
<div class="td" style="left:76.10000000000002px;top:112.39999999999998px;">北京</div>
<div class="td" style="left:164.29999999999995px;top:112.39999999999998px;">太平洋百货</div>
<div class="td" style="left:271px;top:112.39999999999998px;">ORDER00000052</div>
<div class="td" style="left:383.79999999999995px;top:112.39999999999998px;">Tint</div>
<div class="td" style="left:494.4px;top:112.39999999999998px;width:76.60000000000002px;text-align:right;color:#b8262d;font-weight:bold">1796</div>
<div class="td" style="left:578px;top:112.39999999999998px;width:86.29999999999995px;text-align:right">-</div>
<div class="td" style="left:671.3px;top:112.39999999999998px;width:76.0px;text-align:right">1796</div>
<div class="td" style="left:754.3px;top:112.39999999999998px;width:85.90000000000009px;text-align:right">-</div>
<div class="td" style="left:847.2px;top:112.39999999999998px;width:75.5px;text-align:right">-</div>
<div class="td" style="left:929.7px;top:112.39999999999998px;width:76.29999999999995px;text-align:right">2</div>
<div class="td" style="left:0;top:138.89999999999998px;width:68.10000000000002px;text-align:center">6</div>
<div class="td" style="left:271px;top:138.89999999999998px;">ORDER00000077</div>
<div class="td" style="left:383.79999999999995px;top:138.89999999999998px;">Extra Lip tint</div>
<div class="td" style="left:494.4px;top:138.89999999999998px;width:76.60000000000002px;text-align:right;color:#b8262d;font-weight:bold">2576</div>
<div class="td" style="left:578px;top:138.89999999999998px;width:86.29999999999995px;text-align:right">-</div>
<div class="td" style="left:671.3px;top:138.89999999999998px;width:76.0px;text-align:right">2576</div>
<div class="td" style="left:754.3px;top:138.89999999999998px;width:85.90000000000009px;text-align:right">-</div>
<div class="td" style="left:847.2px;top:138.89999999999998px;width:75.5px;text-align:right">-</div>
<div class="td" style="left:929.7px;top:138.89999999999998px;width:76.29999999999995px;text-align:right">2</div>
<div class="td" style="left:0;top:165.39999999999998px;width:68.10000000000002px;text-align:center">7</div>
<div class="td" style="left:164.29999999999995px;top:165.39999999999998px;">欧亚</div>
<div class="td" style="left:271px;top:165.39999999999998px;">ORDER00000089</div>
<div class="td" style="left:383.79999999999995px;top:165.39999999999998px;">Others</div>
<div class="td" style="left:494.4px;top:165.39999999999998px;width:76.60000000000002px;text-align:right;color:#b8262d;font-weight:bold">980</div>
<div class="td" style="left:578px;top:165.39999999999998px;width:86.29999999999995px;text-align:right">980</div>
<div class="td" style="left:671.3px;top:165.39999999999998px;width:76.0px;text-align:right">-</div>
<div class="td" style="left:754.3px;top:165.39999999999998px;width:85.90000000000009px;text-align:right">1</div>
<div class="td" style="left:847.2px;top:165.39999999999998px;width:75.5px;text-align:right">-</div>
<div class="td" style="left:929.7px;top:165.39999999999998px;width:76.29999999999995px;text-align:right">-</div>
<div class="td" style="left:0;top:191.89999999999998px;width:68.10000000000002px;text-align:center">8</div>
<div class="td" style="left:271px;top:191.89999999999998px;">ORDER00000093</div>
<div class="td" style="left:383.79999999999995px;top:191.89999999999998px;">Oil</div>
<div class="td" style="left:494.4px;top:191.89999999999998px;width:76.60000000000002px;text-align:right;color:#b8262d;font-weight:bold">5040</div>
<div class="td" style="left:578px;top:191.89999999999998px;width:86.29999999999995px;text-align:right">5040</div>
<div class="td" style="left:671.3px;top:191.89999999999998px;width:76.0px;text-align:right">-</div>
<div class="td" style="left:754.3px;top:191.89999999999998px;width:85.90000000000009px;text-align:right">3</div>
<div class="td" style="left:847.2px;top:191.89999999999998px;width:75.5px;text-align:right">-</div>
<div class="td" style="left:929.7px;top:191.89999999999998px;width:76.29999999999995px;text-align:right">-</div>
<div class="td" style="left:0;top:218.39999999999998px;width:68.10000000000002px;text-align:center">9</div>
<div class="td" style="left:164.29999999999995px;top:218.39999999999998px;">汉光广场店</div>
<div class="td" style="left:271px;top:218.39999999999998px;">ORDER00000043</div>
<div class="td" style="left:383.79999999999995px;top:218.39999999999998px;">Others</div>
<div class="td" style="left:494.4px;top:218.39999999999998px;width:76.60000000000002px;text-align:right;color:#b8262d;font-weight:bold">1288</div>
<div class="td" style="left:578px;top:218.39999999999998px;width:86.29999999999995px;text-align:right">-</div>
<div class="td" style="left:671.3px;top:218.39999999999998px;width:76.0px;text-align:right">1288</div>
<div class="td" style="left:754.3px;top:218.39999999999998px;width:85.90000000000009px;text-align:right">-</div>
<div class="td" style="left:847.2px;top:218.39999999999998px;width:75.5px;text-align:right">-</div>
<div class="td" style="left:929.7px;top:218.39999999999998px;width:76.29999999999995px;text-align:right">1</div>
<div class="td" style="left:0;top:244.89999999999998px;width:68.10000000000002px;text-align:center">10</div>
<div class="td" style="left:271px;top:244.89999999999998px;">ORDER00000073</div>
<div class="td" style="left:383.79999999999995px;top:244.89999999999998px;">Fragrance</div>
<div class="td" style="left:494.4px;top:244.89999999999998px;width:76.60000000000002px;text-align:right;color:#b8262d;font-weight:bold">3864</div>
<div class="td" style="left:578px;top:244.89999999999998px;width:86.29999999999995px;text-align:right">3864</div>
<div class="td" style="left:671.3px;top:244.89999999999998px;width:76.0px;text-align:right">-</div>
<div class="td" style="left:754.3px;top:244.89999999999998px;width:85.90000000000009px;text-align:right">3</div>
<div class="td" style="left:847.2px;top:244.89999999999998px;width:75.5px;text-align:right">-</div>
<div class="td" style="left:929.7px;top:244.89999999999998px;width:76.29999999999995px;text-align:right">-</div>
<div class="td" style="left:0;top:271.4px;width:68.10000000000002px;text-align:center">11</div>
<div class="td" style="left:164.29999999999995px;top:271.4px;">港汇广场店</div>
<div class="td" style="left:271px;top:271.4px;">ORDER00000124</div>
<div class="td" style="left:383.79999999999995px;top:271.4px;">Foundation</div>
<div class="td" style="left:494.4px;top:271.4px;width:76.60000000000002px;text-align:right;color:#b8262d;font-weight:bold">5940</div>
<div class="td" style="left:578px;top:271.4px;width:86.29999999999995px;text-align:right">-</div>
<div class="td" style="left:671.3px;top:271.4px;width:76.0px;text-align:right">5940</div>
<div class="td" style="left:754.3px;top:271.4px;width:85.90000000000009px;text-align:right">-</div>
<div class="td" style="left:847.2px;top:271.4px;width:75.5px;text-align:right">3</div>
<div class="td" style="left:929.7px;top:271.4px;width:76.29999999999995px;text-align:right">-</div>
<div class="td" style="left:0;top:297.9px;width:68.10000000000002px;text-align:center">12</div>
<div class="td" style="left:156.29999999999995px;top:297.9px;width:332.1px;text-align:right;color:#111;font-weight:bold">地区</div>
<div class="td" style="left:494.4px;top:297.9px;width:76.60000000000002px;text-align:right;color:#b8262d;font-weight:bold">21484</div>
<div class="td" style="left:578px;top:297.9px;width:86.29999999999995px;text-align:right;color:#111;font-weight:bold">9884</div>
<div class="td" style="left:671.3px;top:297.9px;width:76.0px;text-align:right;color:#111;font-weight:bold">11600</div>
<div class="td" style="left:754.3px;top:297.9px;width:85.90000000000009px;text-align:right;color:#111;font-weight:bold">7</div>
<div class="td" style="left:847.2px;top:297.9px;width:75.5px;text-align:right;color:#111;font-weight:bold">3</div>
<div class="td" style="left:929.7px;top:297.9px;width:76.29999999999995px;text-align:right;color:#111;font-weight:bold">5</div>
<div class="td" style="left:0;top:324.4px;width:68.10000000000002px;text-align:center">13</div>
<div class="td" style="left:76.10000000000002px;top:324.4px;">南京</div>
<div class="td" style="left:164.29999999999995px;top:324.4px;">太平洋百货</div>
<div class="td" style="left:271px;top:324.4px;">ORDER00000074</div>
<div class="td" style="left:383.79999999999995px;top:324.4px;">Fragrance</div>
<div class="td" style="left:494.4px;top:324.4px;width:76.60000000000002px;text-align:right;color:#b8262d;font-weight:bold">1288</div>
<div class="td" style="left:578px;top:324.4px;width:86.29999999999995px;text-align:right">1288</div>
<div class="td" style="left:671.3px;top:324.4px;width:76.0px;text-align:right">-</div>
<div class="td" style="left:754.3px;top:324.4px;width:85.90000000000009px;text-align:right">1</div>
<div class="td" style="left:847.2px;top:324.4px;width:75.5px;text-align:right">-</div>
<div class="td" style="left:929.7px;top:324.4px;width:76.29999999999995px;text-align:right">-</div>
<div class="td" style="left:0;top:350.9px;width:68.10000000000002px;text-align:center">14</div>
<div class="td" style="left:164.29999999999995px;top:350.9px;">来福士店</div>
<div class="td" style="left:271px;top:350.9px;">ORDER00000038</div>
<div class="td" style="left:383.79999999999995px;top:350.9px;">make up</div>
<div class="td" style="left:494.4px;top:350.9px;width:76.60000000000002px;text-align:right;color:#b8262d;font-weight:bold">1176</div>
<div class="td" style="left:578px;top:350.9px;width:86.29999999999995px;text-align:right">-</div>
<div class="td" style="left:671.3px;top:350.9px;width:76.0px;text-align:right">1176</div>
<div class="td" style="left:754.3px;top:350.9px;width:85.90000000000009px;text-align:right">-</div>
<div class="td" style="left:847.2px;top:350.9px;width:75.5px;text-align:right">2</div>
<div class="td" style="left:929.7px;top:350.9px;width:76.29999999999995px;text-align:right">-</div>
<div class="td" style="left:0;top:377.4px;width:68.10000000000002px;text-align:center">15</div>
<div class="td" style="left:164.29999999999995px;top:377.4px;">梅龙镇伊势丹</div>
<div class="td" style="left:271px;top:377.4px;">ORDER00000001</div>
<div class="td" style="left:383.79999999999995px;top:377.4px;">Crushed Lips</div>
<div class="td" style="left:494.4px;top:377.4px;width:76.60000000000002px;text-align:right;color:#b8262d;font-weight:bold">980</div>
<div class="td" style="left:578px;top:377.4px;width:86.29999999999995px;text-align:right">980</div>
<div class="td" style="left:671.3px;top:377.4px;width:76.0px;text-align:right">-</div>
<div class="td" style="left:754.3px;top:377.4px;width:85.90000000000009px;text-align:right">1</div>
<div class="td" style="left:847.2px;top:377.4px;width:75.5px;text-align:right">-</div>
<div class="td" style="left:929.7px;top:377.4px;width:76.29999999999995px;text-align:right">-</div>
<div class="td" style="left:0;top:403.9px;width:68.10000000000002px;text-align:center">16</div>
<div class="td" style="left:271px;top:403.9px;">ORDER00000008</div>
<div class="td" style="left:383.79999999999995px;top:403.9px;">Crushed Lips</div>
<div class="td" style="left:494.4px;top:403.9px;width:76.60000000000002px;text-align:right;color:#b8262d;font-weight:bold">1176</div>
<div class="td" style="left:578px;top:403.9px;width:86.29999999999995px;text-align:right">1176</div>
<div class="td" style="left:671.3px;top:403.9px;width:76.0px;text-align:right">-</div>
<div class="td" style="left:754.3px;top:403.9px;width:85.90000000000009px;text-align:right">2</div>
<div class="td" style="left:847.2px;top:403.9px;width:75.5px;text-align:right">-</div>
<div class="td" style="left:929.7px;top:403.9px;width:76.29999999999995px;text-align:right">-</div>
<div class="td" style="left:0;top:430.4px;width:68.10000000000002px;text-align:center">17</div>
<div class="td" style="left:271px;top:430.4px;">ORDER00000044</div>
<div class="td" style="left:383.79999999999995px;top:430.4px;">Foundation</div>
<div class="td" style="left:494.4px;top:430.4px;width:76.60000000000002px;text-align:right;color:#b8262d;font-weight:bold">1740</div>
<div class="td" style="left:578px;top:430.4px;width:86.29999999999995px;text-align:right">1740</div>
<div class="td" style="left:671.3px;top:430.4px;width:76.0px;text-align:right">-</div>
<div class="td" style="left:754.3px;top:430.4px;width:85.90000000000009px;text-align:right">3</div>
<div class="td" style="left:847.2px;top:430.4px;width:75.5px;text-align:right">-</div>
<div class="td" style="left:929.7px;top:430.4px;width:76.29999999999995px;text-align:right">-</div>
</div>
<div class="a" style="left:1415px;top:130.5px;width:3.5px;height:467.5px;background:rgba(170,170,170,0.6)"></div>
<div class="a" style="left:995.5px;top:190px;width:153px;height:49px;border:3px solid #f21818;border-radius:3px"></div>
<div class="a" style="left:1177.5px;top:172px;width:230px;height:67px;border:3px solid #2196f8;border-radius:3px"></div>
<div class="a" style="left:1040px;top:688px;font-size:12px;color:#666;line-height:15px">共<span style="color:#2a8ae6">152</span>条数据</div>
<svg class="a" style="left:1124px;top:690.5px" width="7" height="10"><path d="M5.5 0.8 L1.2 4.6 L5.5 8.4" stroke="#b0b0b0" stroke-width="1" fill="none"/></svg>
<div class="a" style="left:1137px;top:684.5px;width:20.5px;height:20px;border:1px solid #6aaaf0;border-radius:2px;color:#2f86e4;font-size:12px;line-height:18px;text-align:center">1</div>
<div class="a" style="left:1162.3px;top:688px;width:10px;text-align:center;font-size:12px;color:#aaa;line-height:15px">2</div>
<div class="a" style="left:1182.8px;top:688px;width:10px;text-align:center;font-size:12px;color:#aaa;line-height:15px">3</div>
<div class="a" style="left:1203.3px;top:688px;width:10px;text-align:center;font-size:12px;color:#aaa;line-height:15px">4</div>
<div class="a" style="left:1223.9px;top:688px;width:10px;text-align:center;font-size:12px;color:#aaa;line-height:15px">5</div>
<div class="a" style="left:1244.4px;top:688px;width:10px;text-align:center;font-size:12px;color:#aaa;line-height:15px">6</div>
<div class="a" style="left:1264.9px;top:688px;width:10px;text-align:center;font-size:12px;color:#aaa;line-height:15px">7</div>
<div class="a" style="left:1285.4px;top:688px;width:10px;text-align:center;font-size:12px;color:#aaa;line-height:15px">8</div>
<svg class="a" style="left:1309px;top:690.5px" width="7" height="10"><path d="M1.2 0.8 L5.5 4.6 L1.2 8.4" stroke="#b0b0b0" stroke-width="1" fill="none"/></svg>
<div class="a" style="left:1330px;top:688px;font-size:12px;color:#777;line-height:15px">前往</div>
<div class="a" style="left:1358.5px;top:684.5px;width:33.5px;height:20px;border:1px solid #dcdcdc;border-radius:2px;color:#555;font-size:12px;line-height:18px;text-align:center">1</div>
<div class="a" style="left:1396px;top:688px;font-size:12px;color:#777;line-height:15px">/8页</div>
</body></html>
